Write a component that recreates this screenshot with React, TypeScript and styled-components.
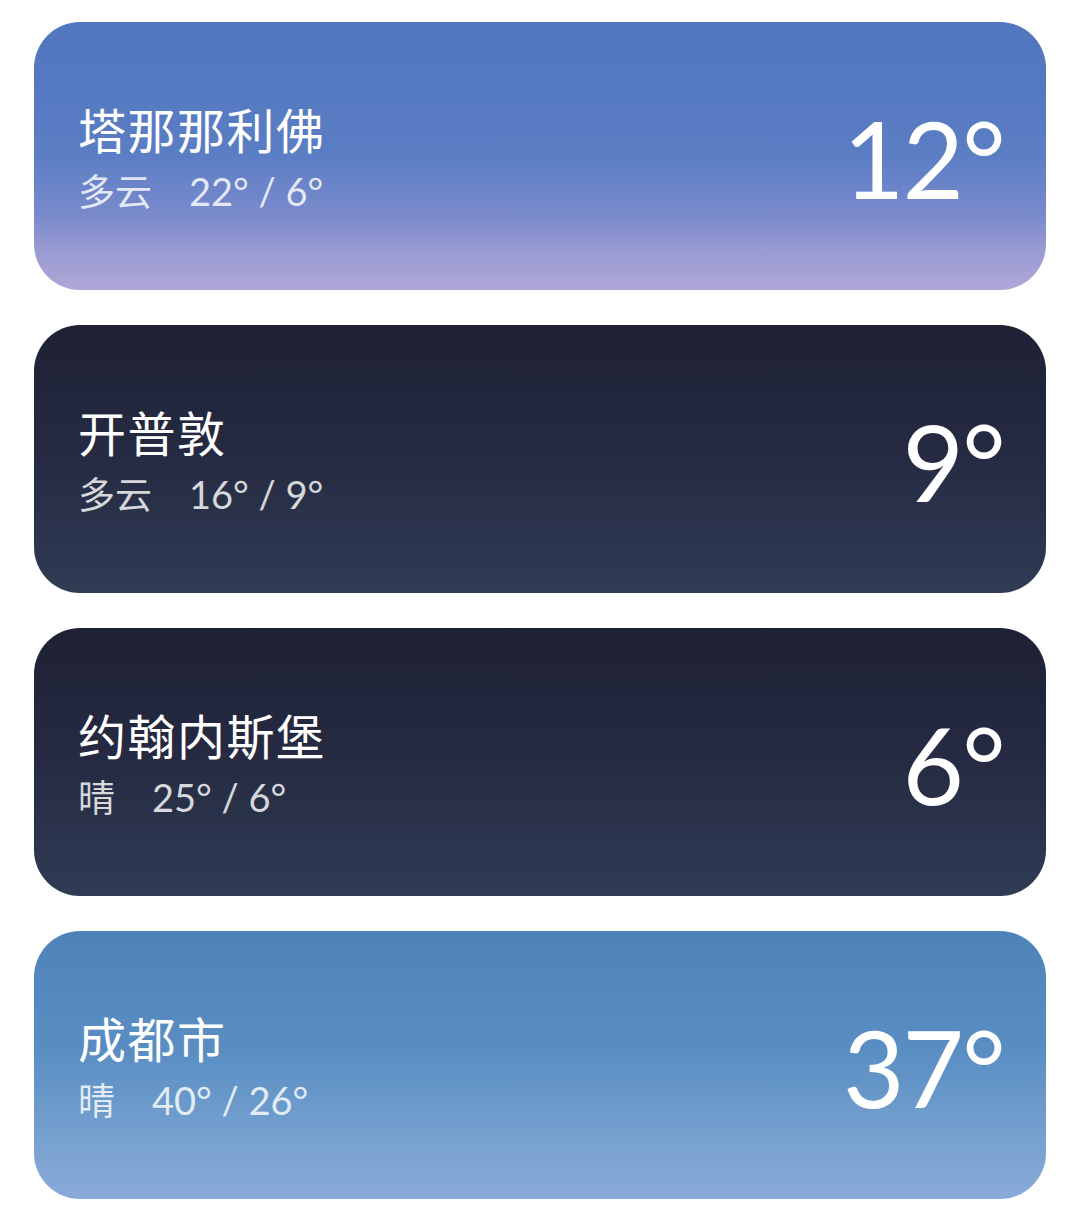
import React from 'react';
import styled, { createGlobalStyle } from 'styled-components';

type Theme = 'dawn' | 'night' | 'sky';

interface City {
  name: string;
  condition: string;
  high: number;
  low: number;
  now: number;
  theme: Theme;
}

const cities: City[] = [
  { name: '塔那那利佛', condition: '多云', high: 22, low: 6, now: 12, theme: 'dawn' },
  { name: '开普敦', condition: '多云', high: 16, low: 9, now: 9, theme: 'night' },
  { name: '约翰内斯堡', condition: '晴', high: 25, low: 6, now: 6, theme: 'night' },
  { name: '成都市', condition: '晴', high: 40, low: 26, now: 37, theme: 'sky' },
];

const backgrounds: Record<Theme, string> = {
  dawn: 'linear-gradient(180deg, #5176bd 0%, #5a7dc4 48%, #7a8acc 72%, #9a9bd3 86%, #b0a7d8 100%)',
  night: 'linear-gradient(180deg, #1e2134 0%, #262b43 50%, #2f3c54 100%)',
  sky: 'linear-gradient(180deg, #4e83ba 0%, #5a8ec3 45%, #74a0cf 75%, #8aaad8 100%)',
};

const GlobalStyle = createGlobalStyle`
  html, body {
    margin: 0;
    padding: 0;
    background: #ffffff;
  }
  body {
    font-family: "Noto Sans CJK SC", "Noto Sans", sans-serif;
  }
`;

export default function App() {
  return (
    <>
      <GlobalStyle />
      <List>
        {cities.map((c) => (
          <Card key={c.name} $theme={c.theme}>
            <Info>
              <CityName>{c.name}</CityName>
              <Summary>
                {c.condition}
                <Range>
                  {c.high}° / {c.low}°
                </Range>
              </Summary>
            </Info>
            <Temp>{c.now}°</Temp>
          </Card>
        ))}
      </List>
    </>
  );
}

const List = styled.div`
  display: flex;
  flex-direction: column;
  gap: 35px;
  padding: 22px 34px 30px 34px;
`;

const Card = styled.div<{ $theme: Theme }>`
  display: flex;
  align-items: center;
  justify-content: space-between;
  height: 268px;
  border-radius: 46px;
  padding: 0 42px 0 44px;
  background: ${({ $theme }) => backgrounds[$theme]};
  color: #ffffff;
`;

const Info = styled.div`
  display: flex;
  flex-direction: column;
  margin-top: -3px;
`;

const CityName = styled.div`
  font-family: "Noto Sans CJK SC", sans-serif;
  font-size: 48px;
  line-height: normal;
  letter-spacing: 1.5px;
  font-weight: 400;
`;

const Summary = styled.div`
  font-family: "Noto Sans CJK SC", sans-serif;
  font-size: 37px;
  line-height: normal;
  color: rgba(255, 255, 255, 0.82);
`;

const Range = styled.span`
  font-family: Lato, "Noto Sans", sans-serif;
  font-size: 38px;
  margin-left: 37px;
`;

const Temp = styled.div`
  font-family: Lato, "Noto Sans", sans-serif;
  font-size: 106px;
  font-weight: 400;
  line-height: 1;
  letter-spacing: -2px;
  margin-top: 4px;
`;
